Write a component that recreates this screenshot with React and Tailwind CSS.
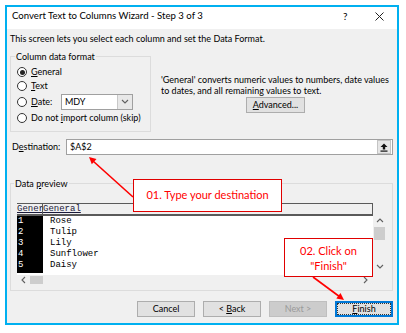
import React from "react";

const Radio = ({ checked }) => (
  <span className="w-[10px] h-[10px] shrink-0 rounded-full border border-[#333] bg-white flex items-center justify-center">
    {checked && <span className="w-[5px] h-[5px] rounded-full bg-[#222]" />}
  </span>
);

const Chevron = ({ dir = "down", className = "" }) => {
  const pts = {
    up: "1,5 4,2 7,5",
    down: "1,2 4,5 7,2",
    left: "5,1 2,4 5,7",
    right: "2,1 5,4 2,7",
  }[dir];
  return (
    <svg width="8" height="8" viewBox="0 0 8 8" className={className}>
      <polyline points={pts} fill="none" stroke="#606060" strokeWidth="1.1" />
    </svg>
  );
};

const Btn = ({ children, disabled, focused }) => (
  <div
    className={
      "w-[58px] h-[16px] flex items-center justify-center " +
      (focused
        ? "border-2 border-[#0078d7] bg-[#e1e1e1]"
        : disabled
        ? "border border-[#bfbfbf] bg-[#cccccc] text-[#9a9a9a]"
        : "border border-[#adadad] bg-[#e1e1e1]")
    }
  >
    {focused ? (
      <span className="w-full h-full flex items-center justify-center border border-dotted border-[#333]">
        {children}
      </span>
    ) : (
      children
    )}
  </div>
);

const rows = ["Rose", "Tulip", "Lily", "Sunflower", "Daisy"];

export default function App() {
  return (
    <div className="relative w-[406px] h-[333px] bg-white pl-[5px] pt-[5px] font-['Lato',sans-serif] text-[9px] text-black">
      <div className="w-[394px] h-[320px] border-2 border-[#00b0f0] flex flex-col">
        {/* TITLE BAR */}
        <div className="h-[22px] bg-white flex items-start pt-[3px] pl-[5px] text-[9.6px] leading-[12px]">
          <span>Convert Text to Columns Wizard - Step 3 of 3</span>
          <span className="ml-auto w-[10px] text-[10px]">?</span>
          <svg width="9" height="9" viewBox="0 0 9 9" className="mt-[2px] ml-[22px] mr-[13px]">
            <path d="M0.5 0.5 L8.5 8.5 M8.5 0.5 L0.5 8.5" stroke="#222" strokeWidth="1" />
          </svg>
        </div>

        {/* BODY */}
        <div className="flex-1 bg-[#f0f0f0] pl-[3px] pr-[4px] flex flex-col">
          <div className="mt-[5px] h-[10px] leading-[10px]">
            This screen lets you select each column and set the Data Format.
          </div>

          <div className="mt-[12px] flex">
            {/* Column data format */}
            <div className="w-[141px] h-[76px] border border-[#dcdcdc] pl-[6px]">
              <div className="-mt-[6px] ml-[-2px] w-fit px-[1px] h-[11px] leading-[11px] bg-[#f0f0f0]">
                Column data format
              </div>
              <div className="mt-[3px] h-[14px] flex items-center gap-[4px]">
                <Radio checked />
                <span><span className="underline">G</span>eneral</span>
              </div>
              <div className="h-[14px] flex items-center gap-[4px]">
                <Radio />
                <span><span className="underline">T</span>ext</span>
              </div>
              <div className="h-[17px] flex items-center gap-[4px]">
                <Radio />
                <span className="w-[26px]"><span className="underline">D</span>ate:</span>
                <div className="w-[72px] h-[16px] border border-[#a0a0a0] bg-white flex">
                  <span className="flex-1 pl-[3px] leading-[14px]">MDY</span>
                  <span className="w-[15px] bg-[#e8e8e8] border-l border-[#c8c8c8] flex items-center justify-center">
                    <Chevron dir="down" />
                  </span>
                </div>
              </div>
              <div className="h-[16px] flex items-center gap-[4px]">
                <Radio />
                <span>Do not <span className="underline">i</span>mport column (skip)</span>
              </div>
            </div>

            {/* explanation */}
            <div className="ml-[10px] mt-[18px] w-[232px]">
              <div className="leading-[11px] whitespace-nowrap">
                'General' converts numeric values to numbers, date values
              </div>
              <div className="leading-[11px]">to dates, and all remaining values to text.</div>
              <div className="mt-[1px] ml-[85px] w-[59px] h-[16px] border border-[#adadad] bg-[#e1e1e1] flex items-center justify-center">
                <span><span className="underline">A</span>dvanced...</span>
              </div>
            </div>
          </div>

          {/* Destination */}
          <div className="mt-[7px] h-[16px] flex items-center">
            <span className="w-[56px] pl-[2px]">
              D<span className="underline">e</span>stination:
            </span>
            <div className="flex-1 h-[16px] border border-[#a0a0a0] bg-white flex items-center">
              <span className="flex-1 pl-[3px]">$A$2</span>
              <span className="w-[14px] h-[14px] mr-[1px] bg-[#e6e6e6] border border-[#c4c4c4] flex items-center justify-center">
                <svg width="8" height="9" viewBox="0 0 8 9">
                  <path d="M4 0.5 L7.5 4 L5.2 4 L5.2 6.5 L2.8 6.5 L2.8 4 L0.5 4 Z" fill="#111" />
                  <rect x="0.5" y="7.5" width="7" height="1.2" fill="#111" />
                </svg>
              </span>
            </div>
          </div>

          {/* Data preview */}
          <div className="mt-[28px] h-[108px] border border-[#dcdcdc]">
            <div className="-mt-[6px] ml-[3px] w-fit px-[1px] h-[11px] leading-[11px] bg-[#f0f0f0]">
              Data <span className="underline">p</span>review
            </div>
            <div className="ml-[6px] mt-[14px] w-[369px] flex flex-col font-['Liberation_Mono',monospace] text-[9px]">
              <div className="flex">
                <div className="w-[356px]">
                  <div className="h-[13px] border-t border-r border-b-2 border-[#5a5a5a] flex leading-[10px] text-[#1a1a3a]">
                    <span className="w-[26px] border-r border-[#5a5a5a] underline overflow-hidden whitespace-nowrap">Gener</span>
                    <span className="underline">General</span>
                  </div>
                  <div className="h-[59px] flex bg-white">
                    <div className="w-[26px] h-[57px] bg-black text-white pl-[1px]">
                      {rows.map((_, i) => (
                        <div key={i} className="h-[11px] leading-[11px]">{i + 1}</div>
                      ))}
                    </div>
                    <div className="pl-[7px]">
                      {rows.map((r) => (
                        <div key={r} className="h-[11px] leading-[11px]">{r}</div>
                      ))}
                    </div>
                  </div>
                </div>
                <div className="w-[13px] pt-[13px] flex flex-col items-center">
                  <Chevron dir="up" className="mt-[1px]" />
                  <div className="mt-[2px] w-[11px] h-[13px] bg-[#cdcdcd]" />
                  <Chevron dir="down" className="mt-[23px]" />
                </div>
              </div>
              <div className="w-[356px] h-[10px] flex items-center">
                <Chevron dir="left" className="ml-[3px]" />
                <div className="ml-[2px] w-[13px] h-[8px] bg-[#cdcdcd]" />
                <Chevron dir="right" className="ml-auto mr-[3px]" />
              </div>
            </div>
          </div>

          {/* Buttons */}
          <div className="mt-[10px] flex justify-end gap-[8px]">
            <Btn>Cancel</Btn>
            <Btn>
              <span>&lt; <span className="underline">B</span>ack</span>
            </Btn>
            <Btn disabled>Next &gt;</Btn>
            <Btn focused>
              <span><span className="underline">F</span>inish</span>
            </Btn>
          </div>
        </div>
      </div>

      {/* ANNOTATIONS */}
      <div className="absolute left-[133px] top-[179px] w-[149px] h-[33px] border border-[#e00000] bg-white flex items-center justify-center text-[11px] text-[#ff0000]">
        01. Type your destination
      </div>
      <div className="absolute left-[284px] top-[238px] w-[89px] h-[39px] border border-[#e00000] bg-white flex flex-col items-center justify-center text-[11px] leading-[15px] text-[#ff0000]">
        <span>02. Click on</span>
        <span>"Finish"</span>
      </div>
      <svg className="absolute inset-0 pointer-events-none" width="406" height="333" viewBox="0 0 406 333">
        <line x1="133" y1="197" x2="93" y2="161" stroke="#f00" strokeWidth="1.6" />
        <polygon points="89,157 96.5,159.1 91.8,164.3" fill="#f00" />
        <line x1="313" y1="277" x2="340" y2="297" stroke="#f00" strokeWidth="1.6" />
        <polygon points="344,300 336.3,298.6 340.5,293" fill="#f00" />
      </svg>
    </div>
  );
}
